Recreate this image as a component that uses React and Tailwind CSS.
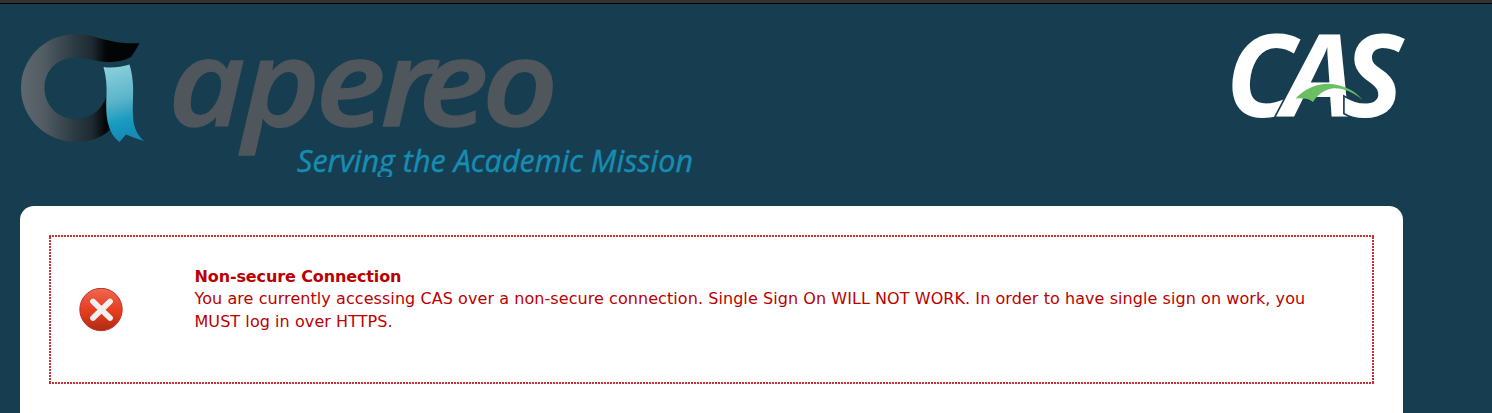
function RibbonMark() {
  return (
    <svg className="absolute left-0 top-0" width="128" height="112" viewBox="20 34 128 112">
      <defs>
        <linearGradient id="ring" gradientUnits="userSpaceOnUse" x1="21" y1="0" x2="110" y2="0">
          <stop offset="0" stopColor="#5e686f" />
          <stop offset="0.25" stopColor="#525c63" />
          <stop offset="0.6" stopColor="#2c3b43" />
          <stop offset="0.8" stopColor="#1d2a31" />
          <stop offset="0.95" stopColor="#050607" />
          <stop offset="1" stopColor="#030405" />
        </linearGradient>
        <linearGradient id="ribbon" x1="0" y1="0" x2="0.15" y2="1">
          <stop offset="0" stopColor="#8fd3dc" />
          <stop offset="0.5" stopColor="#5cb4c9" />
          <stop offset="0.78" stopColor="#189bc1" />
          <stop offset="1" stopColor="#158bb5" />
        </linearGradient>
      </defs>
      <path
        fill="url(#ring)"
        d="M139.500 43C124 44.500 108 41 94 36.500C87 34.800 80 34.200 74 34.300C44 35 21 59 21 88C21 118 46 142 76 142C90 142 101 138 110 130L106 97C102 110 90 119 75 119C58 119 44.500 105 44.500 88C44.500 70 58 57.500 75 57.500C86 57.500 96 62 108 62C116 62 124 61 131 57C134 53 137 48 139.500 43Z"
      />
      <path
        fill="url(#ribbon)"
        d="M103.500 67C112 68.500 121 67 129.500 64.500C133 76 133.500 87 133 98C132.500 118 132 130 144 141C138 139 132 137 126 134.500L119.500 142C107 132 105.500 116 106.500 96C107 85 106 76 103.500 67Z"
      />
    </svg>
  );
}

function ApereoLogo() {
  return (
    <div className="relative h-[143px] w-[680px] overflow-hidden">
      <RibbonMark />
      <svg className="absolute left-0 top-0" width="680" height="143" viewBox="20 34 680 143">
        <text
          transform="scale(1.1 1)"
          x="153.200 220.700 287 346 380.500 438.500"
          y="125.500"
          className="fill-[#50575c] stroke-[#50575c] stroke-[1.5px] font-['Open_Sans',sans-serif] text-[120px] font-semibold italic"
        >
          apereo
        </text>
        <text
          x="297"
          y="172"
          textLength="396"
          lengthAdjust="spacingAndGlyphs"
          className="fill-[#158db4] stroke-[#158db4] stroke-[0.4px] font-['Open_Sans',sans-serif] text-[31px] italic"
        >
          Serving the Academic Mission
        </text>
      </svg>
    </div>
  );
}

function CasLogo() {
  return (
    <svg width="175" height="90" viewBox="1230 32 175 90">
      <text
        x="1225.500 1283 1342.500"
        y="117"
        className="fill-white stroke-[#173e50] stroke-[3.5px] font-['Open_Sans',sans-serif] text-[115px] font-bold italic [paint-order:stroke]"
      >
        CAS
      </text>
      <path
        fill="#6abf63"
        d="M1295.500 98.500C1307 87 1321 82 1335 84.500C1347 86.500 1356 92 1362.500 100C1353 92 1342 87.500 1332 88.500C1324 90 1317 95 1313 102C1309 98.500 1303 98 1295.500 98.500Z"
      />
    </svg>
  );
}

function ErrorIcon() {
  return (
    <svg width="44" height="44" viewBox="0 0 44 44" className="shrink-0">
      <defs>
        <linearGradient id="disc" x1="0" y1="0" x2="0" y2="1">
          <stop offset="0" stopColor="#ee6a50" />
          <stop offset="0.35" stopColor="#e8492f" />
          <stop offset="0.6" stopColor="#e23a1b" />
          <stop offset="1" stopColor="#ab2c16" />
        </linearGradient>
      </defs>
      <circle cx="22" cy="21.500" r="21.200" fill="url(#disc)" stroke="#c32f2b" strokeWidth="1" />
      <path d="M14 13.500L31 30M31 13.500L14 30" stroke="#f4f0ef" strokeWidth="5.800" strokeLinecap="round" />
    </svg>
  );
}

export default function App() {
  return (
    <div className="h-[413px] overflow-hidden bg-[#173e50]">
      <div className="h-1 border-b border-black bg-[#333333]" />
      <div className="ml-5 w-[1383px]">
        <header className="flex h-[202px] items-start justify-between pt-[30px]">
          <ApereoLogo />
          <div className="-mr-0.5 -mt-0.5">
            <CasLogo />
          </div>
        </header>
        <main className="h-[260px] rounded-[14px] bg-white px-[29px] pt-[29px]">
          <section className="h-[149px] bg-[repeating-linear-gradient(90deg,#c83232_0_1.7px,#ffffff_1.7px_3px)] py-0.5">
            <div className="h-[145px] bg-[repeating-linear-gradient(180deg,#c83232_0_1.7px,#ffffff_1.7px_3px)] px-0.5">
              <div className="flex h-[145px] items-center bg-white pl-7 text-[#bb0000]">
                <ErrorIcon />
                <div className="-mt-5 ml-[71.5px] whitespace-nowrap font-['DejaVu_Sans',Verdana,sans-serif] text-[16px] leading-[22.4px]">
                  <h2 className="font-bold tracking-[-0.12px]">Non-secure Connection</h2>
                  <p className="tracking-[0.067px]">
                    You are currently accessing CAS over a non-secure connection. Single Sign On WILL NOT WORK. In order to have single sign on work, you
                    <br />
                    MUST log in over HTTPS.
                  </p>
                </div>
              </div>
            </div>
          </section>
        </main>
      </div>
    </div>
  );
}
